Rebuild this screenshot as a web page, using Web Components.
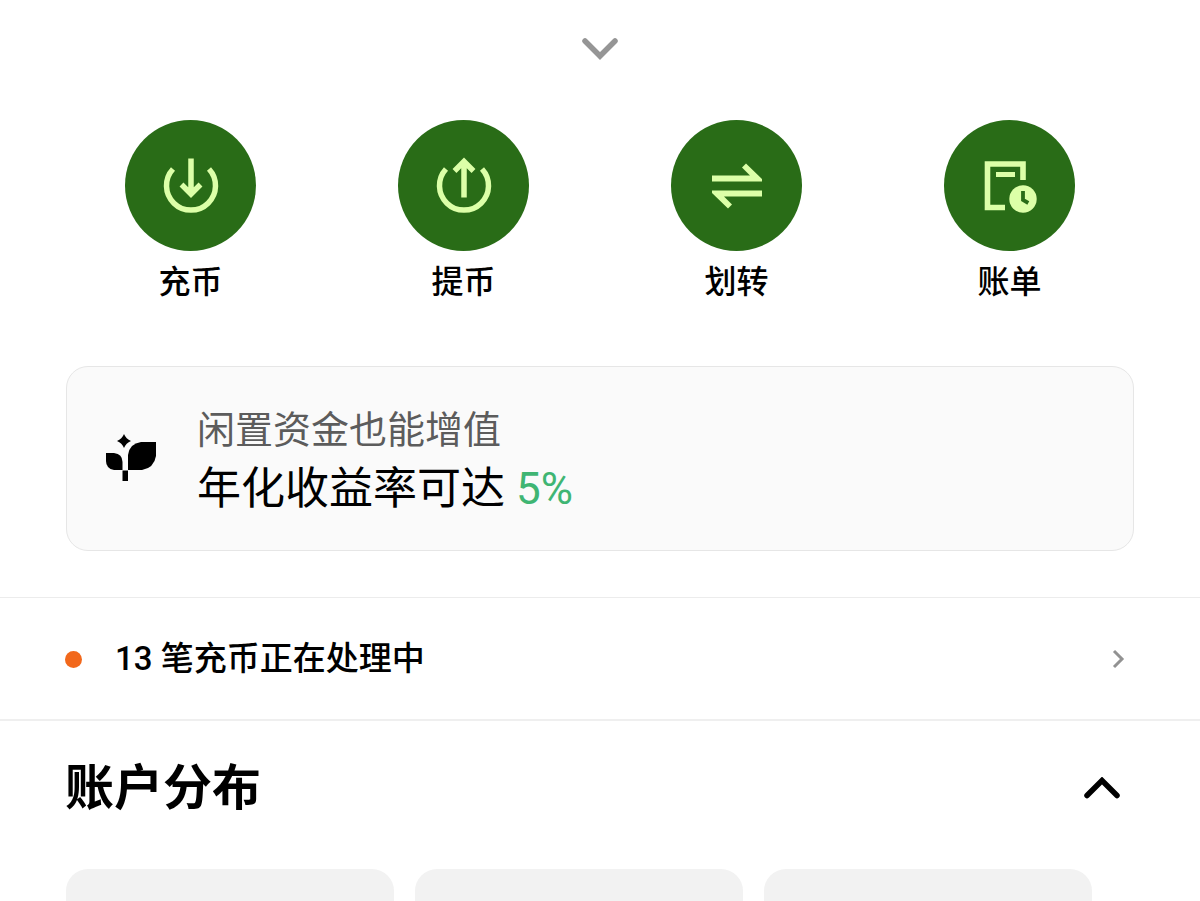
<!DOCTYPE html>
<html lang="zh-CN">
<head>
<meta charset="utf-8">
<meta name="viewport" content="width=device-width, initial-scale=1">
<title>资产</title>
<style>
  body {
    margin: 0;
    background: #fff;
    color: #000;
    font-family: Roboto, "Noto Sans CJK SC", sans-serif;
  }
</style>
</head>
<body>
<asset-page>
  <expand-toggle slot="toggle"></expand-toggle>

  <quick-actions slot="actions">
    <quick-action icon="deposit">充币</quick-action>
    <quick-action icon="withdraw">提币</quick-action>
    <quick-action icon="transfer">划转</quick-action>
    <quick-action icon="bill">账单</quick-action>
  </quick-actions>

  <earn-banner slot="banner">
    <span slot="title">闲置资金也能增值</span>
    <span slot="text">年化收益率可达</span>
    <span slot="rate">5%</span>
  </earn-banner>

  <pending-row slot="pending">13 笔充币正在处理中</pending-row>

  <account-section slot="accounts">
    <span slot="title">账户分布</span>
    <account-tile></account-tile>
    <account-tile></account-tile>
    <account-tile></account-tile>
  </account-section>
</asset-page>

<script>
const ICONS = {
  deposit: `
    <g fill="none" stroke="currentColor" stroke-width="5.5">
      <path d="M32 4.5V40M22.500 30.500L32 40L41.500 30.500"/>
      <path d="M14 15A24.5 24.5 0 1 0 50 15"/>
    </g>`,
  withdraw: `
    <g fill="none" stroke="currentColor" stroke-width="5.5">
      <path d="M32 43.5V8M22.500 17L32 7.500L41.500 17"/>
      <path d="M14 15A24.5 24.5 0 1 0 50 15"/>
    </g>`,
  transfer: `
    <g fill="currentColor">
      <path d="M7 21.500H45L37 13.500L41 9.500L57 25V27.500H7Z"/>
      <path d="M57 42.500H19L27 50.500L23 54.500L7 39V36.500H57Z"/>
    </g>`,
  bill: `
    <path d="M27 53.500H9.500V10H45V26" fill="none" stroke="currentColor" stroke-width="5.600"/>
    <path d="M18 20.500H37" stroke="currentColor" stroke-width="5"/>
    <circle cx="45" cy="45" r="13.700" fill="currentColor"/>
    <path d="M45 37V45.900L50.300 49" fill="none" stroke="var(--action-bg, #296c17)" stroke-width="3.800"/>`,
};

class AssetPage extends HTMLElement {
  constructor() {
    super();
    this.attachShadow({ mode: "open" }).innerHTML = /* html */ `
      <style>
        :host {
          display: block;
        }

        main {
          display: flex;
          flex-direction: column;
          min-height: 100vh;
        }

        slot[name="accounts"]::slotted(*) {
          flex: 1;
        }
      </style>

      <main>
        <slot name="toggle"></slot>
        <slot name="actions"></slot>
        <slot name="banner"></slot>
        <slot name="pending"></slot>
        <slot name="accounts"></slot>
      </main>
    `;
  }
}

class ExpandToggle extends HTMLElement {
  constructor() {
    super();
    this.attachShadow({ mode: "open" }).innerHTML = /* html */ `
      <style>
        :host {
          display: flex;
          justify-content: center;
          padding: 36px 0 60px;
        }

        button {
          display: block;
          padding: 0;
          border: 0;
          background: none;
          color: #959595;
          cursor: pointer;
        }

        svg {
          display: block;
        }
      </style>

      <button type="button" aria-label="展开">
        <svg width="40" height="24" viewBox="0 0 40 24" fill="none" stroke="currentColor" stroke-width="5.500" stroke-linecap="round">
          <path d="M5 5L20 20L35 5"/>
        </svg>
      </button>
    `;
  }
}

class QuickActions extends HTMLElement {
  constructor() {
    super();
    this.attachShadow({ mode: "open" }).innerHTML = /* html */ `
      <style>
        :host {
          display: block;
          padding: 0 54px;
        }

        nav {
          display: grid;
          grid-template-columns: repeat(4, 1fr);
        }
      </style>

      <nav><slot></slot></nav>
    `;
  }
}

class QuickAction extends HTMLElement {
  static observedAttributes = ["icon"];

  constructor() {
    super();
    this.attachShadow({ mode: "open" });
  }

  connectedCallback() {
    this.render();
  }

  attributeChangedCallback() {
    this.render();
  }

  render() {
    this.shadowRoot.innerHTML = /* html */ `
      <style>
        :host {
          display: flex;
          justify-content: center;
        }

        button {
          display: flex;
          flex-direction: column;
          align-items: center;
          gap: 7px;
          padding: 0;
          border: 0;
          background: none;
          color: inherit;
          font: inherit;
          font-size: 32px;
          font-weight: 500;
          line-height: 48px;
          cursor: pointer;
        }

        .disc {
          display: grid;
          place-items: center;
          width: 131px;
          height: 131px;
          border-radius: 50%;
          background: var(--action-bg, #296c17);
          color: #dcffa8;
        }
      </style>

      <button type="button">
        <span class="disc">
          <svg width="64" height="64" viewBox="0 0 64 64" aria-hidden="true">${ICONS[this.getAttribute("icon")] || ""}</svg>
        </span>
        <slot></slot>
      </button>
    `;
  }
}

class EarnBanner extends HTMLElement {
  constructor() {
    super();
    this.attachShadow({ mode: "open" }).innerHTML = /* html */ `
      <style>
        :host {
          display: block;
          padding: 60px 66px 46px;
        }

        .card {
          display: flex;
          align-items: center;
          gap: 40px;
          padding: 34px 38px 30px;
          border: 1px solid #e6e6e6;
          border-radius: 22px;
          background: #fafafa;
        }

        svg {
          flex: none;
        }

        .title,
        .text {
          margin: 0;
        }

        .title {
          color: #5c5c5c;
          font-size: 38px;
          line-height: 58px;
        }

        .text {
          font-size: 44px;
          line-height: 61px;
        }

        .rate {
          color: #3fb573;
        }
      </style>

      <section class="card">
        <svg width="52" height="56" viewBox="0 0 52 56" aria-hidden="true">
          <path d="M19 1Q21 6 26 8Q21 10 19 15Q17 10 12 8Q17 6 19 1Z"/>
          <path d="M1 20H9Q17.500 21 17.500 29V37H9Q1 35.500 1 28Z"/>
          <path d="M51 9V23Q49 35 37 37H23V22Q24.500 10.500 36 9Z"/>
          <path d="M17.500 37.500H23V48H17.500Z"/>
        </svg>
        <div>
          <p class="title"><slot name="title"></slot></p>
          <p class="text"><slot name="text"></slot> <span class="rate"><slot name="rate"></slot></span></p>
        </div>
      </section>
    `;
  }
}

class PendingRow extends HTMLElement {
  constructor() {
    super();
    this.attachShadow({ mode: "open" }).innerHTML = /* html */ `
      <style>
        :host {
          display: block;
          border-top: 1px solid #ececec;
          border-bottom: 2px solid #efefef;
        }

        button {
          display: flex;
          align-items: center;
          width: 100%;
          padding: 37px 72px 36px 65px;
          border: 0;
          background: none;
          color: inherit;
          font: inherit;
          font-size: 33px;
          font-weight: 500;
          line-height: 48px;
          text-align: left;
          cursor: pointer;
        }

        .dot {
          width: 17px;
          height: 17px;
          margin-right: 33px;
          border-radius: 50%;
          background: #f2681b;
        }

        .label {
          flex: 1;
        }
      </style>

      <button type="button">
        <span class="dot"></span>
        <span class="label"><slot></slot></span>
        <svg width="20" height="24" viewBox="0 0 20 24" fill="none" stroke="#929292" stroke-width="3" aria-hidden="true">
          <path d="M6 4L14 12L6 20"/>
        </svg>
      </button>
    `;
  }
}

class AccountSection extends HTMLElement {
  constructor() {
    super();
    this.attachShadow({ mode: "open" }).innerHTML = /* html */ `
      <style>
        :host {
          display: flex;
          flex-direction: column;
        }

        header {
          display: flex;
          align-items: center;
          justify-content: space-between;
          padding: 32px 78px 45px 65px;
        }

        h2 {
          margin: 0;
          font-size: 49px;
          font-weight: 700;
          line-height: 71px;
        }

        button {
          padding: 0;
          border: 0;
          background: none;
          color: #000;
          cursor: pointer;
        }

        svg {
          display: block;
        }

        .tiles {
          flex: 1;
          display: grid;
          grid-template-columns: repeat(3, 1fr);
          gap: 21px;
          padding: 0 108px 0 66px;
        }
      </style>

      <header>
        <h2><slot name="title"></slot></h2>
        <button type="button" aria-label="收起">
          <svg width="40" height="24" viewBox="0 0 40 24" fill="none" stroke="currentColor" stroke-width="5.500" stroke-linecap="round">
            <path d="M5 18.500L20 3.500L35 18.500"/>
          </svg>
        </button>
      </header>
      <div class="tiles"><slot></slot></div>
    `;
  }
}

class AccountTile extends HTMLElement {
  constructor() {
    super();
    this.attachShadow({ mode: "open" }).innerHTML = /* html */ `
      <style>
        :host {
          display: block;
          min-height: 24px;
          border-radius: 22px 22px 0 0;
          background: #f2f2f2;
        }
      </style>

      <slot></slot>
    `;
  }
}

customElements.define("asset-page", AssetPage);
customElements.define("expand-toggle", ExpandToggle);
customElements.define("quick-actions", QuickActions);
customElements.define("quick-action", QuickAction);
customElements.define("earn-banner", EarnBanner);
customElements.define("pending-row", PendingRow);
customElements.define("account-section", AccountSection);
customElements.define("account-tile", AccountTile);
</script>
</body>
</html>
